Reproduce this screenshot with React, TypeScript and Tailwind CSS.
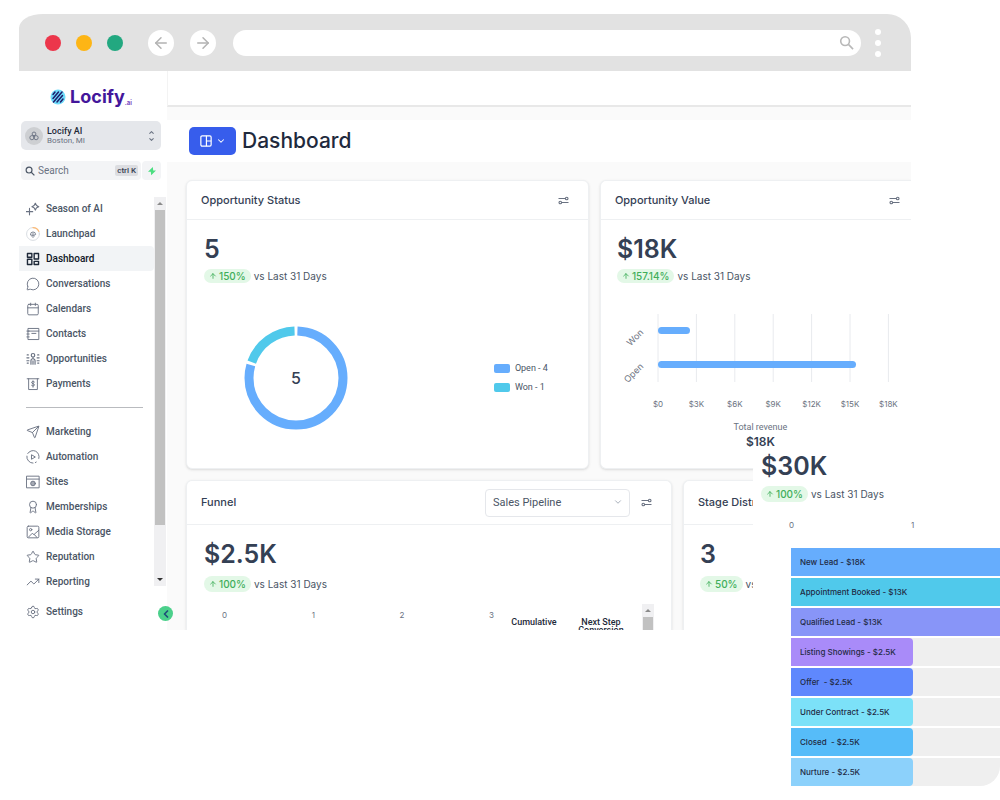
import React from "react";
import {
  ArrowLeft,
  ArrowRight,
  ArrowUp,
  Award,
  Calendar,
  ChevronDown,
  ChevronLeft,
  ChevronUp,
  MessageCircle,
  Send,
  Settings,
  Star,
  TrendingUp,
} from "lucide-react";

const inter = "font-['Inter','Liberation_Sans',sans-serif]";
const roboto = "font-['Roboto','Liberation_Sans',sans-serif]";

function Svg({ children, width = 1.6 }: { children: React.ReactNode; width?: number }) {
  return (
    <svg
      viewBox="0 0 24 24"
      className="size-3.5"
      fill="none"
      stroke="currentColor"
      strokeWidth={width}
      strokeLinecap="round"
      strokeLinejoin="round"
      aria-hidden="true"
    >
      {children}
    </svg>
  );
}

const lucide = { size: 14, strokeWidth: 1.6, "aria-hidden": true } as const;

const icons: Record<string, React.ReactNode> = {
  season: (
    <Svg width={1.9}>
      <path d="M16 2c.8 3.700 2.300 5.200 6 6-3.700.8-5.200 2.300-6 6-.8-3.700-2.300-5.200-6-6 3.700-.8 5.200-2.300 6-6zM6 11v11M.5 16.500h11" />
    </Svg>
  ),
  launchpad: (
    <Svg width={1.4}>
      <circle cx="12" cy="12" r="11" stroke="#d1d5db" />
      <path d="M12 1a11 11 0 0 1 10 6.500" stroke="#fdba74" strokeWidth="2" />
      <path d="M7.500 13a4.500 4.500 0 1 1 9 0l-3 1h-3zM10.500 14v2.500l1.500 1.500 1.500-1.500V14M12 10.500v2" />
    </Svg>
  ),
  dashboard: (
    <Svg width={2.4}>
      <path d="M2.500 2.500h7.500v6.500H2.500zM14 2.500h7.500v9.500H14zM2.500 12.500h7.500v9H2.500zM14 16h7.500v5.500H14z" />
    </Svg>
  ),
  conversations: <MessageCircle {...lucide} />,
  calendars: <Calendar {...lucide} />,
  contacts: (
    <Svg>
      <path d="M4 2.500h18v19H4zM4 7h18M1.500 7h4M1.500 12h4M1.500 17h4M10 11h7" />
    </Svg>
  ),
  opportunities: (
    <Svg width={2}>
      <circle cx="12" cy="5.500" r="3" />
      <path d="M12 9v2M8.500 21v-6a3.500 3.500 0 0 1 7 0v6M12 15v6M2 5h2M20 5h2M2 19h2M20 19h2M1.500 10h3.500M19 10h3.500M1.500 15h3.500M19 15h3.500" />
    </Svg>
  ),
  payments: (
    <Svg>
      <path d="M2 3h20M4.500 3v18.500h15V3M14.500 8.500c-1-1-5-1.200-5 1s5 1.500 5 4-4 2.300-5 1M12 6.500v11" />
    </Svg>
  ),
  marketing: <Send {...lucide} />,
  automation: (
    <Svg>
      <path d="M22 14.500A10.500 10.500 0 0 0 3 6M1.500 10.500A10.500 10.500 0 0 0 12 22.500M16 21.500l1.500-.8M10 8.500l6 3.500-6 3.500z" />
    </Svg>
  ),
  sites: (
    <Svg>
      <path d="M1.500 2h21v20h-21zM1.500 7h21" />
      <circle cx="12" cy="14.500" r="4" fill="currentColor" fillOpacity="0.6" />
    </Svg>
  ),
  memberships: <Award {...lucide} />,
  media: (
    <Svg>
      <rect x="2" y="2" width="20" height="20" rx="2" />
      <circle cx="8" cy="8" r="2" />
      <path d="M4 21l7-7 3 3M22 9l-8 7 5 5.500" />
    </Svg>
  ),
  reputation: <Star {...lucide} />,
  reporting: <TrendingUp {...lucide} />,
  settings: <Settings {...lucide} />,
};

function Magnifier({ className, width = 1.9 }: { className: string; width?: number }) {
  return (
    <svg viewBox="0 0 16 16" className={className} fill="none" stroke="currentColor" strokeWidth={width} aria-hidden="true">
      <circle cx="6.500" cy="6.500" r="4.700" />
      <path d="M10 10l5 5" />
    </svg>
  );
}

const primaryNav = [
  ["season", "Season of AI"],
  ["launchpad", "Launchpad"],
  ["dashboard", "Dashboard"],
  ["conversations", "Conversations"],
  ["calendars", "Calendars"],
  ["contacts", "Contacts"],
  ["opportunities", "Opportunities"],
  ["payments", "Payments"],
];

const secondaryNav = [
  ["marketing", "Marketing"],
  ["automation", "Automation"],
  ["sites", "Sites"],
  ["memberships", "Memberships"],
  ["media", "Media Storage"],
  ["reputation", "Reputation"],
  ["reporting", "Reporting"],
];

function NavItem({ icon, label }: { icon: string; label: string }) {
  const active = icon === "dashboard";
  return (
    <li>
      <a
        href="#"
        aria-current={active ? "page" : undefined}
        className={`flex h-[25px] items-center gap-1.5 rounded-r pl-[7px] text-[10px] font-medium ${
          active ? "bg-[#f2f4f6] text-gray-900" : "text-gray-600"
        }`}
      >
        <span className={active ? "text-gray-800" : "text-gray-500"}>{icons[icon]}</span>
        {label}
      </a>
    </li>
  );
}

function Logo() {
  return (
    <div className="flex h-[50px] items-center justify-center gap-1 pt-0.5 pr-1">
      <svg viewBox="0 0 16 16" className="size-4" aria-hidden="true">
        <circle cx="8" cy="8" r="7.500" fill="#6fdcfa" />
        <path
          d="M3 5.500L5 3M3 9.500L8.500 3M3.500 13L12 3M7 13l5.500-6.500M10.500 13l2.500-3"
          stroke="#1e1b6b"
          strokeWidth="1.500"
          strokeLinecap="round"
        />
      </svg>
      <p className={`${inter} flex items-end text-[18px] leading-6 font-bold text-[#43169b]`}>
        Locify<span className="text-[6px] leading-[12px] text-[#7c4fc4]">.ai</span>
      </p>
    </div>
  );
}

function Sidebar() {
  return (
    <aside className={`relative w-[148px] shrink-0 bg-white ${roboto}`}>
      <Logo />
      <div className="pr-1.5 pl-0.5">
        <button
          type="button"
          className="flex h-[29px] w-full items-center gap-1 rounded-[5px] bg-[#e5e7eb] pr-1.5 pl-1 text-left"
        >
          <span className="flex size-[18px] items-center justify-center rounded-full bg-[#cdcfd2] text-gray-500">
            <svg viewBox="0 0 24 24" className="size-2.5" fill="none" stroke="currentColor" strokeWidth="2.200" aria-hidden="true">
              <circle cx="12" cy="7" r="4.500" />
              <circle cx="7" cy="16" r="5" />
              <circle cx="17" cy="16" r="5" />
              <path d="M12 10v7" />
            </svg>
          </span>
          <span className="flex-1">
            <span className="block text-[9px] leading-[10px] font-medium text-gray-800">Locify AI</span>
            <span className="block text-[8px] leading-[10px] text-gray-500">Boston, MI</span>
          </span>
          <span className="flex flex-col text-gray-500">
            <ChevronUp size={7} strokeWidth={3.500} />
            <ChevronDown size={7} strokeWidth={3.500} />
          </span>
        </button>
        <div className="mt-[11px] flex h-[19px] gap-px">
          <label className="flex min-w-0 flex-1 items-center gap-[3px] rounded bg-[#f3f4f6] pr-[3px] pl-1 text-gray-600">
            <Magnifier className="size-2.5 shrink-0" />
            <input
              type="text"
              aria-label="Search"
              placeholder="Search"
              className="w-0 min-w-0 flex-1 text-[10px] placeholder:text-gray-500"
            />
            <kbd className={`${roboto} rounded-xs bg-[#dcdde1] px-0.5 text-[8px] leading-[11px] font-medium text-gray-700`}>
              ctrl K
            </kbd>
          </label>
          <button
            type="button"
            aria-label="Quick actions"
            className="flex w-[19px] items-center justify-center rounded bg-[#f3f4f6]"
          >
            <svg viewBox="0 0 10 10" className="size-2.5" aria-hidden="true">
              <path d="M5.800 1L1 5.700h2.800L4.200 9.200 9 4.500H6.200z" fill="#4ade80" />
            </svg>
          </button>
        </div>
      </div>
      <div className="mt-4 flex pr-px">
        <nav aria-label="Main" className="flex-1">
          <ul>
            {primaryNav.map(([icon, label]) => (
              <NavItem key={icon} icon={icon} label={label} />
            ))}
          </ul>
          <hr className="mt-[11px] mr-[11px] mb-[11px] ml-[7px] border-[#b9bbbf]" />
          <ul>
            {secondaryNav.map(([icon, label]) => (
              <NavItem key={icon} icon={icon} label={label} />
            ))}
          </ul>
        </nav>
        <div className="mt-px mb-2 flex w-3 flex-col bg-[#f0f0f2]" aria-hidden="true">
          <span className="py-[5px]">
            <svg viewBox="0 0 6 3" className="mx-auto h-[3px] w-1.5">
              <path d="M0 3l3-3 3 3z" fill="#8b8b8b" />
            </svg>
          </span>
          <span className="mx-px flex-1 bg-[#c1c1c1]" />
          <span className="mt-12 py-[5px]">
            <svg viewBox="0 0 6 3" className="mx-auto h-[3px] w-1.5">
              <path d="M0 0l3 3 3-3z" fill="#333" />
            </svg>
          </span>
        </div>
      </div>
      <ul className="pt-[5px] pb-[5px]">
        <NavItem icon="settings" label="Settings" />
      </ul>
      <button
        type="button"
        aria-label="Collapse sidebar"
        className="absolute -right-1.5 bottom-[9px] z-10 flex size-[15px] items-center justify-center rounded-full bg-[#4bd08b] text-[#1f4e79]"
      >
        <ChevronLeft size={12} strokeWidth={3.500} />
      </button>
    </aside>
  );
}

function FilterButton() {
  return (
    <button type="button" aria-label="Filter" className="text-gray-500">
      <svg viewBox="0 0 11 9" className="h-[9px] w-[11px]" fill="none" stroke="currentColor" strokeWidth="1.100" aria-hidden="true">
        <path d="M0.500 2.500H7M10.500 6.500H4" />
        <circle cx="8.700" cy="2.500" r="1.300" />
        <circle cx="2.300" cy="6.500" r="1.300" />
      </svg>
    </button>
  );
}

function Metric({ value, change, spacing }: { value: string; change: string; spacing: string }) {
  return (
    <div>
      <p className="text-[25px] leading-8 font-semibold text-[#344054]">{value}</p>
      <p className={`flex items-center gap-[3px] text-[10px] text-gray-600 ${spacing}`}>
        <span className="flex items-center gap-0.5 rounded-full bg-[#e3f8e7] px-[5px] font-medium text-[#3fae5a]">
          <ArrowUp size={8} strokeWidth={2.500} />
          {change}
        </span>
        vs Last 31 Days
      </p>
    </div>
  );
}

const cardBase = "min-w-0 border border-[#eef0f2] bg-white shadow-sm";

function StatusCard() {
  return (
    <section className={`${cardBase} flex-[402] rounded-md`}>
      <header className="flex h-[39px] items-center justify-between border-b border-[#eef0f2] pr-[19px] pl-3.5">
        <h2 className="text-[11px] font-medium text-[#344054]">Opportunity Status</h2>
        <FilterButton />
      </header>
      <div className="pt-[13px] pl-[17px]">
        <Metric value="5" change="150%" spacing="mt-1 leading-[14px]" />
        <div className="flex items-center justify-between pt-[42px] pr-10 pb-[37px] pl-[39px]">
          <svg viewBox="0 0 106 106" className="size-[106px]" role="img" aria-label="Open 4, Won 1">
            <g fill="none" strokeWidth="9" transform="rotate(-90 53 53)">
              <circle cx="53" cy="53" r="47" stroke="#66adfd" pathLength={100} strokeDasharray="79 21" strokeDashoffset="-0.500" />
              <circle cx="53" cy="53" r="47" stroke="#50c9eb" pathLength={100} strokeDasharray="19 81" strokeDashoffset="-80.500" />
            </g>
            <text x="53" y="59" textAnchor="middle" fontSize="16" fontWeight="500" fill="#344054">
              5
            </text>
          </svg>
          <ul className={`${roboto} flex flex-col gap-2 text-[9px] leading-[11px] text-gray-600`}>
            <li className="flex items-center gap-[5px]">
              <span className="h-[9px] w-4 rounded-xs bg-[#66adfd]" />
              Open - 4
            </li>
            <li className="flex items-center gap-[5px]">
              <span className="h-[9px] w-4 rounded-xs bg-[#50c9eb]" />
              Won - 1
            </li>
          </ul>
        </div>
      </div>
    </section>
  );
}

const ticks = ["$0", "$3K", "$6K", "$9K", "$12K", "$15K", "$18K"];

function ValueCard() {
  return (
    <section className={`${cardBase} flex-[311] rounded-l-md border-r-0`}>
      <header className="flex h-[39px] items-center justify-between border-b border-[#eef0f2] pr-[11px] pl-3.5">
        <h2 className="text-[11px] font-medium text-[#344054]">Opportunity Value</h2>
        <FilterButton />
      </header>
      <div className="pt-[13px] pl-4">
        <Metric value="$18K" change="157.14%" spacing="mt-1 leading-[14px]" />
        <svg viewBox="0 0 290 110" className="mt-6 h-[110px] w-[290px]" role="img" aria-label="Revenue by status">
          {ticks.map((tick, i) => (
            <g key={tick}>
              <path d={`M${41 + i * 38.4} 7v68`} stroke="#e8eaee" />
              <text x={41 + i * 38.4} y="100" textAnchor="middle" fontSize="8" fill="#6b7280">
                {tick}
              </text>
            </g>
          ))}
          <rect x="41" y="20" width="32" height="7" rx="3.500" fill="#66adfd" />
          <rect x="41" y="54" width="198" height="7" rx="3.500" fill="#66adfd" />
          <g fontSize="9" fill="#6b7280" textAnchor="end">
            <text transform="translate(27 26) rotate(-45)">Won</text>
            <text transform="translate(27 60) rotate(-45)">Open</text>
          </g>
        </svg>
        <div className="mt-1 pr-[7px] text-center">
          <p className={`${roboto} text-[9px] leading-3 text-gray-500`}>Total revenue</p>
          <p className="text-[12px] leading-[18px] font-semibold text-[#344054]">$18K</p>
        </div>
      </div>
    </section>
  );
}

function FunnelCard() {
  return (
    <section className={`${cardBase} flex-[486] rounded-t-md border-b-0`}>
      <header className="flex h-[44px] items-center border-b border-[#eef0f2] pr-[19px] pl-3.5">
        <h2 className="flex-1 text-[11px] font-medium text-[#344054]">Funnel</h2>
        <div className="relative mr-[11px]">
          <select
            aria-label="Pipeline"
            className={`${roboto} h-7 w-[145px] appearance-none rounded border border-gray-200 bg-white pl-[7px] text-[11px] text-gray-600`}
          >
            <option>Sales Pipeline</option>
          </select>
          <ChevronDown size={10} className="pointer-events-none absolute top-[9px] right-[7px] text-gray-400" />
        </div>
        <FilterButton />
      </header>
      <div className="pt-[13px] pl-[17px]">
        <Metric value="$2.5K" change="100%" spacing="mt-1.5 leading-4" />
        <div className="mt-3 flex h-[26px] gap-4 overflow-hidden pr-[17px] text-[8px] text-gray-500">
          <div className="mt-[5px] flex flex-1 justify-between pl-[18px]">
            <span>0</span>
            <span>1</span>
            <span>2</span>
            <span>3</span>
          </div>
          <div className={`${roboto} mt-3.5 flex text-center text-[9px] leading-[8px] font-medium text-gray-800`}>
            <span className="w-[48px]">Cumulative</span>
            <span className="ml-[18px] w-[50px]">Next Step Conversion</span>
          </div>
          <div className="w-3 bg-[#f0f0f2]" aria-hidden="true">
            <svg viewBox="0 0 6 3" className="mx-auto my-[5px] h-[3px] w-1.5">
              <path d="M0 3l3-3 3 3z" fill="#8b8b8b" />
            </svg>
            <div className="mx-px h-5 bg-[#c1c1c1]" />
          </div>
        </div>
      </div>
    </section>
  );
}

function StageCard() {
  return (
    <section className={`${cardBase} flex-[228] rounded-tl-md border-r-0 border-b-0`}>
      <header className="flex h-[44px] items-center border-b border-[#eef0f2] pl-3.5">
        <h2 className="text-[11px] font-medium text-[#344054]">Stage Distribution</h2>
      </header>
      <div className="pt-[13px] pl-4">
        <Metric value="3" change="50%" spacing="mt-1.5 leading-4" />
      </div>
    </section>
  );
}

const stages = [
  { label: "New Lead - $18K", short: false, color: "bg-[#66adfd]" },
  { label: "Appointment Booked - $13K", short: false, color: "bg-[#50c9eb]" },
  { label: "Qualified Lead - $13K", short: false, color: "bg-[#8895f8]" },
  { label: "Listing Showings - $2.5K", short: true, color: "bg-[#a98bf9]" },
  { label: "Offer  - $2.5K", short: true, color: "bg-[#5f88fd]" },
  { label: "Under Contract - $2.5K", short: true, color: "bg-[#7ce1f8]" },
  { label: "Closed  - $2.5K", short: true, color: "bg-[#56bcf9]" },
  { label: "Nurture - $2.5K", short: true, color: "bg-[#8cd1fb]" },
];

function StageOverlay() {
  return (
    <section
      aria-label="Stage distribution"
      className="absolute top-[450px] right-0 z-20 w-[247px] overflow-hidden rounded-[20px] bg-white"
    >
      <div className="pl-2">
        <Metric value="$30K" change="100%" spacing="mt-1 leading-4" />
      </div>
      <div className="mt-[18px] flex pl-9 text-[8px] leading-[10px] text-gray-500">
        <span className="w-[122px]">0</span>
        <span>1</span>
      </div>
      <ul className="mt-[18px] flex flex-col gap-0.5 pl-[38px]">
        {stages.map((stage) => (
          <li key={stage.label} className="bg-[#efefef]">
            <div
              className={`${stage.color} ${
                stage.short ? "w-[122px] rounded-r-[4px]" : "w-full"
              } flex h-7 items-center pl-[9px] text-[8px] font-medium whitespace-pre text-[#1f2a44]`}
            >
              {stage.label}
            </div>
          </li>
        ))}
      </ul>
    </section>
  );
}

function BrowserBar() {
  const round = "flex size-[26px] items-center justify-center rounded-full bg-white text-[#b3b3b3]";
  return (
    <div className="flex h-[57px] items-center rounded-tl-[24px_14px] rounded-tr-[24px] bg-[#e2e2e2] pr-[30px] pl-[26px]">
      <div className="flex gap-[15px]">
        <span className="size-4 rounded-full bg-[#ec364b]" />
        <span className="size-4 rounded-full bg-[#fdb515]" />
        <span className="size-4 rounded-full bg-[#22a880]" />
      </div>
      <div className="ml-[25px] flex gap-4">
        <button type="button" aria-label="Back" className={round}>
          <ArrowLeft size={18} strokeWidth={2} />
        </button>
        <button type="button" aria-label="Forward" className={round}>
          <ArrowRight size={18} strokeWidth={2} />
        </button>
      </div>
      <label className="ml-[17px] flex h-[26px] flex-1 items-center rounded-full bg-white pr-[7px] pl-3 text-[#b8b8b8]">
        <input type="text" aria-label="Address" className="min-w-0 flex-1 text-xs text-gray-700 outline-none" />
        <Magnifier className="size-[15px]" width={1.7} />
      </label>
      <button type="button" aria-label="Browser menu" className="ml-3.5 flex flex-col gap-[5px]">
        <span className="size-[6px] rounded-full bg-white" />
        <span className="size-[6px] rounded-full bg-white" />
        <span className="size-[6px] rounded-full bg-white" />
      </button>
    </div>
  );
}

export default function App() {
  return (
    <div className={`relative min-h-screen bg-white pt-3.5 pr-[89px] pl-[19px] ${inter}`}>
      <BrowserBar />
      <div className="flex">
        <Sidebar />
        <main className="min-w-0 flex-1 overflow-hidden bg-[#fafafa]">
          <div className="h-9 border-b-2 border-l border-[#e8e8e8] border-l-[#f3f3f3] bg-white" />
          <div className="mt-[13px] flex h-[42px] items-center gap-1.5 bg-white pl-[22px]">
            <button
              type="button"
              aria-label="Dashboard views"
              className="flex h-7 w-[47px] items-center justify-center gap-1 rounded-[5px] bg-[#375dec] text-white"
            >
              <svg viewBox="0 0 14 14" className="size-3" fill="none" stroke="currentColor" strokeWidth="1.400" aria-hidden="true">
                <rect x="1" y="1" width="12" height="12" rx="1.500" />
                <path d="M7.500 1v12M7.500 7H13" />
              </svg>
              <ChevronDown size={10} strokeWidth={2.500} />
            </button>
            <h1 className="text-[21px] leading-7 font-medium text-[#1f2a3d]">Dashboard</h1>
          </div>
          <div className="flex flex-col gap-[11px] pt-[18px] pl-[19px]">
            <div className="flex gap-[11px]">
              <StatusCard />
              <ValueCard />
            </div>
            <div className="flex gap-[11px]">
              <FunnelCard />
              <StageCard />
            </div>
          </div>
        </main>
      </div>
      <StageOverlay />
    </div>
  );
}
